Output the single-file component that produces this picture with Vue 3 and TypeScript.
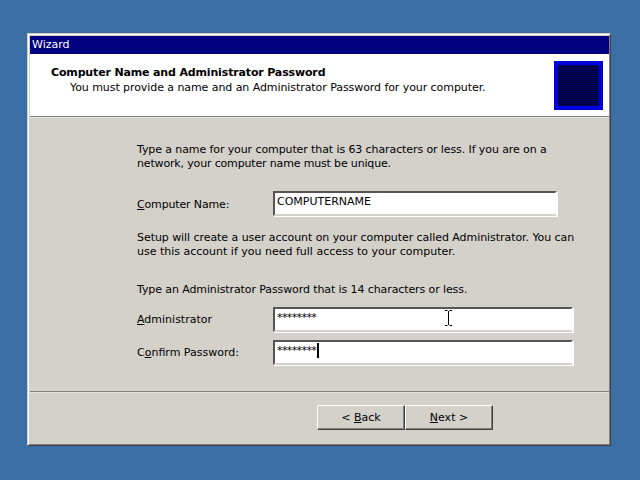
<script setup lang="ts">
</script>

<template>
  <div class="desktop">
    <div class="window">
      <div class="titlebar">Wizard</div>
      <div class="header">
        <div class="header-text">
          <div class="heading">Computer Name and Administrator Password</div>
          <div class="subheading">You must provide a name and an Administrator Password for your computer.</div>
        </div>
        <div class="logo"><div class="logo-inner"></div></div>
      </div>
      <div class="sep"></div>
      <div class="content">
        <p class="para first"><span class="t1">Type a name for your computer that is 63 characters or less. If you are on a</span><br><span class="t2">network, your computer name must be unique.</span></p>
        <div class="row name-row">
          <label class="lbl name-lbl"><span class="tight"><u>C</u>omputer Name:</span></label>
          <div class="field short"><span class="value">COMPUTERNAME</span></div>
        </div>
        <p class="para setup"><span class="t3">Setup will create a user account on your computer called Administrator. You can</span><br>use this account if you need full access to your computer.</p>
        <p class="para pw">Type an Administrator Password that is 14 characters or less.</p>
        <div class="row admin-row">
          <label class="lbl"><u>A</u>dministrator</label>
          <div class="field long">
            <span class="stars">********</span>
            <svg class="ibeam" width="7" height="16" viewBox="0 0 7 16"><path d="M0 .5h2.500M4.500 .5H7M3.500 1v14M0 15.500h2.500M4.500 15.500H7" fill="none" stroke="#000" stroke-width="1"/></svg>
          </div>
        </div>
        <div class="row confirm-row">
          <label class="lbl">C<u>o</u>nfirm Password:</label>
          <div class="field long"><span class="stars">********</span><span class="caret"></span></div>
        </div>
      </div>
      <div class="sep"></div>
      <div class="footer">
        <button class="btn">&lt; <u>B</u>ack</button>
        <button class="btn"><u>N</u>ext &gt;</button>
      </div>
    </div>
  </div>
</template>

<style>
html, body { margin: 0; background: #3a6ea5; }
</style>

<style scoped>
.desktop {
  width: 640px;
  height: 480px;
  padding: 33px 29px 34px 27px;
  box-sizing: border-box;
  background: #3a6ea5;
  font-family: "DejaVu Sans", Verdana, sans-serif;
  font-size: 11px;
  color: #000;
  overflow: hidden;
}
.window {
  height: 413px;
  box-sizing: border-box;
  background: #d4d1cb;
  border: 1px solid;
  border-color: #d4d1cb #404040 #404040 #d4d1cb;
  box-shadow: inset 1px 1px 0 #fff, inset -1px -1px 0 #808080;
  padding: 2px 1px 2px 2px;
  display: flex;
  flex-direction: column;
}
.titlebar {
  height: 18px;
  line-height: 18px;
  background: #000080;
  color: #fff;
  padding-left: 2px;
  flex: none;
}
.header {
  height: 62px;
  flex: none;
  background: #fff;
  display: flex;
  justify-content: space-between;
  padding-right: 6px;
}
.sep {
  height: 2px;
  flex: none;
  background: linear-gradient(#808080 50%, #e6e4de 50%);
}
.heading {
  font-weight: bold;
  margin: 12px 0 0 21px;
  line-height: 14px;
  letter-spacing: -0.15px;
}
.subheading {
  margin: 1px 0 0 40px;
  line-height: 14px;
  letter-spacing: -0.07px;
}
.logo {
  width: 49px;
  height: 49px;
  margin-top: 7px;
  background: #0000e0;
  padding: 4px;
  box-sizing: border-box;
}
.logo-inner {
  width: 100%;
  height: 100%;
  background-color: #000040;
  background-image: repeating-conic-gradient(#000090 0 25%, #000038 0 100%);
  background-size: 2px 2px;
}
.content {
  flex: 1;
  padding-left: 107px;
}
.para {
  margin: 0;
  line-height: 14px;
  white-space: nowrap;
}
.t1 { letter-spacing: -0.1px; }
.t2 { letter-spacing: -0.16px; }
.t3 { letter-spacing: -0.06px; }
.first { padding-top: 25px; }
.setup { margin-top: 15px; }
.pw { margin-top: 24px; letter-spacing: -0.1px; }
.row { display: flex; align-items: center; }
.lbl { width: 136px; flex: none; }
.name-lbl { padding-top: 2px; }
.tight { letter-spacing: -0.15px; }
.name-row { margin-top: 20px; }
.admin-row { margin-top: 10px; }
.confirm-row { margin-top: 8px; }
.field {
  height: 25px;
  box-sizing: border-box;
  background: #fff;
  border: 2px solid;
  border-color: #555 #fff #d4d1cb #555;
  box-shadow: 1px 1px 0 #fff;
  position: relative;
  display: flex;
  align-items: flex-start;
  padding-left: 2px;
}
.short { width: 284px; }
.long { width: 300px; }
.value { line-height: 14px; margin-top: 2px; }
.stars { line-height: 14px; letter-spacing: -0.6px; margin-top: 2px; }
.caret { width: 2px; height: 15px; background: #000; margin: 1px 0 0 1px; }
.ibeam { position: absolute; left: 170px; top: 1px; }
.footer {
  height: 50px;
  box-sizing: border-box;
  flex: none;
  display: flex;
  align-items: flex-start;
  padding: 12px 0 0 287px;
}
.btn {
  width: 88px;
  height: 25px;
  padding: 0;
  margin: 0;
  background: #d4d1cb;
  font: inherit;
  color: #000;
  border: 1px solid;
  border-color: #fff #404040 #404040 #fff;
  box-shadow: inset -1px -1px 0 #808080;
}
</style>
